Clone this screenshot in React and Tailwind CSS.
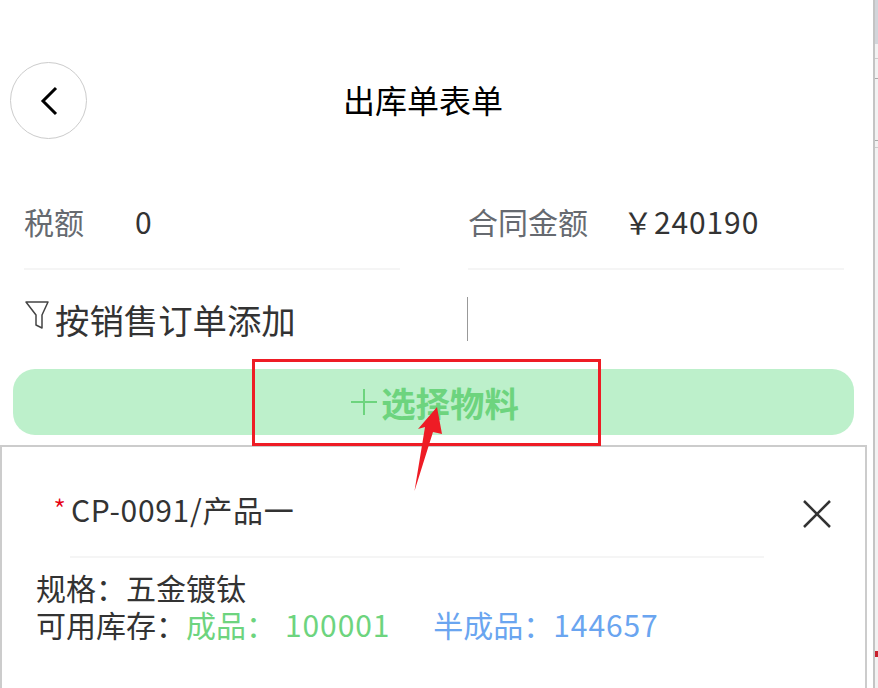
const font = { fontFamily: '"Noto Sans CJK SC", "Noto Sans", sans-serif' };

const Field = ({ label, value, labelWidth }) => (
  <div className="w-[376px] h-[69px] flex items-start border-b-2 border-[#f5f5f5] text-[30px] leading-[40px]">
    <span className={`${labelWidth} text-[#666a70]`}>{label}</span>
    <span className="text-[#333] tracking-[0.9px]">{value}</span>
  </div>
);

export default function App() {
  return (
    <div className="w-[878px] h-[688px] flex overflow-hidden bg-white" style={font}>
      <div className="relative w-[873px] h-[688px]">
        {/* Header */}
        <div className="h-[62px]" />
        <div className="flex items-center h-[77px] pl-[10px]">
          <button className="w-[77px] h-[77px] rounded-full border border-[#ccc] flex items-center justify-center">
            <svg width="20" height="30" viewBox="0 0 20 30" fill="none" stroke="#000" strokeWidth="3">
              <path d="M17 2 L4 15 L17 28" />
            </svg>
          </button>
          <h1 className="ml-[256px] -mt-[4px] text-[32px] leading-none text-black font-normal">出库单表单</h1>
        </div>

        {/* Fields */}
        <div className="flex gap-[68px] pl-[24px] mt-[62px]">
          <Field label="税额" value="0" labelWidth="w-[111px]" />
          <Field label="合同金额" value="￥240190" labelWidth="w-[155px]" />
        </div>

        {/* Filter row */}
        <div className="flex items-center h-[44px] mt-[27px] pl-[24px]">
          <div className="w-[443px] flex items-center text-[34.4px] leading-none text-[#333]">
            <svg width="27" height="30" viewBox="0 0 27 30" fill="none" stroke="#444" strokeWidth="1.5" className="shrink-0 mr-[4px] -mt-[8px]">
              <path d="M2 2h22L18 15v13l-6-3V15L2 2z" strokeLinejoin="round" />
            </svg>
            按销售订单添加
          </div>
          <div className="w-[1px] h-[44px] bg-[#999]" />
        </div>

        {/* Add button */}
        <div className="mt-[28px] ml-[13px] w-[841px] h-[66px] rounded-[22px] bg-[#bdf0cb] flex items-center justify-center text-[#6dd47e] pl-[3px]">
          <svg width="26" height="26" viewBox="0 0 26 26" stroke="#6dd47e" strokeWidth="2" className="mr-[4px]">
            <path d="M0 13h26M13 0v26" />
          </svg>
          <span className="text-[34.4px] leading-none font-bold">选择物料</span>
        </div>

        {/* Material card */}
        <div className="mt-[10px] w-[867px] h-[300px] border-2 border-[#ccc] border-b-0 bg-white">
          <div className="flex items-center justify-between h-[109px] pl-[51px] pr-[34px] pt-[15px]">
            <div className="text-[30px] leading-none text-[#333] tracking-[0.7px]">
              <span className="text-[#e60012] font-light mr-[4px]">*</span>CP-0091/产品一
            </div>
            <svg width="28" height="28" viewBox="0 0 28 28" fill="none" stroke="#333" strokeWidth="2.5" className="mt-[9px]">
              <path d="M1 1 L27 27 M27 1 L1 27" />
            </svg>
          </div>
          <div className="ml-[68px] w-[694px] h-[2px] bg-[#f5f5f5]" />
          <div className="pl-[34px] pt-[11px] text-[30px] leading-[37px] text-[#333]">
            <div>规格：五金镀钛</div>
            <div className="flex">
              <span>可用库存：</span>
              <span className="text-[#6dd47e]">成品：</span>
              <span className="ml-[9px] text-[#6dd47e] tracking-[0.9px]">100001</span>
              <span className="ml-[43px] text-[#6aa5f0]">半成品：</span>
              <span className="text-[#6aa5f0] tracking-[0.9px]">144657</span>
            </div>
          </div>
        </div>

        {/* Screenshot annotation */}
        <div className="absolute left-[252px] top-[359px] w-[349px] h-[87px] border-[3px] border-[#ee1c25]" />
        <svg className="absolute left-[410px] top-[400px]" width="40" height="95" viewBox="0 0 40 95">
          <path d="M27 7 L8 29 L15 27 L4.5 91 L23 32 L32 34 Z" fill="#ee1c25" />
        </svg>
      </div>

      {/* Neighbouring window edge */}
      <div className="w-[5px] h-[688px] border-l-2 border-[#c4c4c4] bg-[#f2f2f2] flex flex-col">
        <div className="h-[44px] bg-[#d2d5da]" />
        <div className="mt-[14px] h-[1px] bg-[#ccc]" />
        <div className="mt-[19px] h-[1px] bg-[#aaa]" />
        <div className="mt-[61px] h-[1px] bg-[#aaa]" />
        <div className="mt-[6px] h-[1px] bg-[#ccc]" />
        <div className="mt-[503px] h-[6px] bg-[#c8202c]" />
      </div>
    </div>
  );
}
